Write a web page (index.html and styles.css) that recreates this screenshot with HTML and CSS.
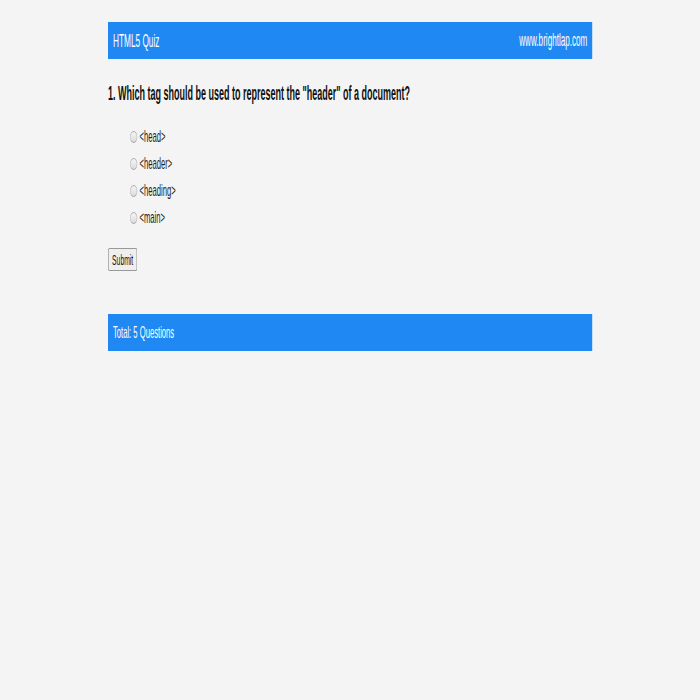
FILE: index.html
```html
<!DOCTYPE html>
<html>
<head>
<meta charset="utf-8">
<link rel="stylesheet" href="styles.css">
</head>
<body>
<div class="viewport">
  <div class="stage">
    <div class="wrap">
      <div class="bar top">
        <span class="title">HTML5 Quiz</span>
        <span class="site">www.brightlap.com</span>
      </div>
      <form class="quiz">
        <h3 class="question">1. Which tag should be used to represent the "header" of a document?</h3>
        <ul class="options">
          <li><input type="radio" name="q1" value="a"><span class="opt">&lt;head&gt;</span></li>
          <li><input type="radio" name="q1" value="b"><span class="opt">&lt;header&gt;</span></li>
          <li><input type="radio" name="q1" value="c"><span class="opt">&lt;heading&gt;</span></li>
          <li><input type="radio" name="q1" value="d"><span class="opt">&lt;main&gt;</span></li>
        </ul>
        <input class="submit" type="button" value="Submit">
      </form>
      <div class="bar bottom">
        <span class="total">Total: 5 Questions</span>
      </div>
    </div>
  </div>
</div>
</body>
</html>
```
FILE: styles.css
```css
html, body {
  margin: 0;
  padding: 0;
  background: #f4f4f4;
  overflow: hidden;
}
.viewport {
  width: 700px;
  height: 700px;
  overflow: hidden;
}
.stage {
  width: 1556px;
  transform: scaleX(0.45);
  transform-origin: 0 0;
  font-family: "Liberation Sans", Arial, sans-serif;
}
.wrap {
  width: 1076px;
  margin: 0 auto;
  padding-top: 22px;
}
.bar {
  background: #1f88f2;
  color: #ffffff;
  height: 37px;
  display: flex;
  align-items: center;
  justify-content: space-between;
  padding: 0 11px;
  font-size: 18.4px;
}
.bar .site {
  font-size: 18px;
}
.bar .total {
  font-size: 17px;
}
.quiz {
  margin: 0;
  padding: 0;
}
.question {
  margin: 23px 0 0 0;
  font-size: 20px;
  line-height: 22px;
  font-weight: bold;
  color: #111111;
}
.options {
  list-style: none;
  margin: 20px 0 0 0;
  padding: 0 0 0 49px;
}
.options li {
  height: 26.8px;
  display: flex;
  align-items: center;
  font-size: 17px;
  color: #222222;
}
.options input {
  appearance: none;
  -webkit-appearance: none;
  box-sizing: border-box;
  width: 16px;
  height: 12px;
  margin: 0 5px 0 0;
  border-radius: 50%;
  border: 1.8px solid #a9a9a9;
  background: linear-gradient(#f4f4f4, #dddddd);
}
.submit {
  margin-top: 17px;
  height: 23px;
  width: 65px;
  font-family: "Liberation Sans", Arial, sans-serif;
  font-size: 15px;
  color: #111111;
  padding: 0;
}
.bottom {
  margin-top: 43px;
}
```
